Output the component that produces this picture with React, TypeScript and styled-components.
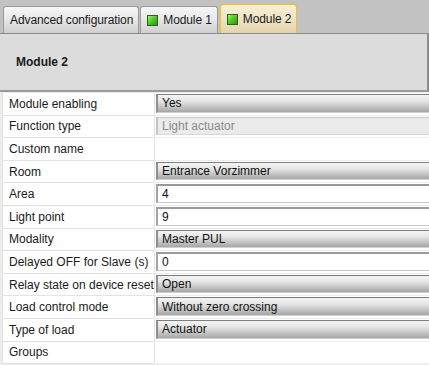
import styled, { createGlobalStyle, css } from "styled-components";

const GlobalStyle = createGlobalStyle`
  html, body {
    margin: 0;
    padding: 0;
    background: #ececec;
  }
  body {
    font-family: "Liberation Sans", Arial, sans-serif;
    font-size: 12px;
    color: #1a1a1a;
  }
`;

type Kind = "select" | "input" | "disabled" | "empty";

const rows: { label: string; value: string; kind: Kind }[] = [
  { label: "Module enabling", value: "Yes", kind: "select" },
  { label: "Function type", value: "Light actuator", kind: "disabled" },
  { label: "Custom name", value: "", kind: "empty" },
  { label: "Room", value: "Entrance Vorzimmer", kind: "select" },
  { label: "Area", value: "4", kind: "input" },
  { label: "Light point", value: "9", kind: "input" },
  { label: "Modality", value: "Master PUL", kind: "select" },
  { label: "Delayed OFF for Slave (s)", value: "0", kind: "input" },
  { label: "Relay state on device reset", value: "Open", kind: "select" },
  { label: "Load control mode", value: "Without zero crossing", kind: "select" },
  { label: "Type of load", value: "Actuator", kind: "select" },
  { label: "Groups", value: "", kind: "empty" },
];

const Page = styled.div`
  width: 429px;
  height: 365px;
  overflow: hidden;
  display: flex;
  flex-direction: column;
`;

const TabBar = styled.div`
  height: 33px;
  display: flex;
  align-items: flex-end;
  gap: 1px;
  padding-left: 3px;
  background: #c2c2c2;
  border-bottom: 1px solid #8a8a8a;
`;

const Tab = styled.div<{ $active?: boolean }>`
  display: flex;
  align-items: center;
  gap: 5px;
  box-sizing: border-box;
  height: 27px;
  padding: 0 5px 0 6px;
  border: 1px solid #9a9a9a;
  border-bottom: none;
  border-radius: 3px 3px 0 0;
  background: linear-gradient(to bottom, #f6f6f6 0%, #e9e9e9 45%, #cfcfcf 100%);
  color: #1a1a1a;
  font-size: 12px;
  letter-spacing: -0.1px;
  white-space: nowrap;
  ${(p) =>
    p.$active &&
    css`
      height: 29px;
      margin-left: 1px;
      border: 1px solid #f2c21a;
      border-bottom: none;
      background: linear-gradient(to bottom, #f7efd9 0%, #efe3c4 50%, #e4d4ad 100%);
    `}
`;

const Led = styled.span`
  width: 9px;
  height: 9px;
  border: 1px solid #2f5e22;
  background: linear-gradient(135deg, #9cf36a 0%, #4fc723 50%, #2b9a12 100%);
`;

const Header = styled.div`
  height: 56px;
  display: flex;
  align-items: center;
  padding-left: 16px;
  background: #dcdcdc;
  border-right: 2px solid #8c8c8c;
  border-bottom: 2px solid #9a9a9a;
  font-weight: bold;
  font-size: 12px;
`;

const Grid = styled.div`
  flex: 1;
  display: grid;
  grid-template-columns: 153px 1fr;
  grid-auto-rows: 22.6px;
  padding: 1px 0 0 2px;
  background: #ececec;
`;

const Label = styled.div`
  display: flex;
  align-items: center;
  padding-left: 6px;
  background: #fff;
  border: 1px solid #e3e3e3;
  border-top: none;
  white-space: nowrap;
  overflow: hidden;
`;

const ValueCell = styled.div`
  display: flex;
  align-items: stretch;
  padding: 1px 0 2px 1px;
  background: #fff;
  border-bottom: 1px solid #ececec;
`;

const Field = styled.div<{ $kind: Kind }>`
  flex: 1;
  display: flex;
  align-items: center;
  padding-left: 4px;
  white-space: nowrap;
  ${(p) =>
    p.$kind === "select" &&
    css`
      border-top: 1px solid #7e7e7e;
      border-left: 2px solid #8e8e8e;
      border-bottom: 1px solid #d0d0d0;
      background: linear-gradient(
        to bottom,
        #f4f4f4 0%,
        #e6e6e6 35%,
        #c4c4c4 70%,
        #a6a6a6 100%
      );
      color: #111;
    `}
  ${(p) =>
    p.$kind === "input" &&
    css`
      border-top: 2px solid #9a9a9a;
      border-left: 2px solid #a4a4a4;
      border-bottom: 1px solid #c8c8c8;
      background: #fff;
      color: #111;
    `}
  ${(p) =>
    p.$kind === "disabled" &&
    css`
      border-top: 1px solid #c4c4c4;
      border-left: 2px solid #c4c4c4;
      border-bottom: 1px solid #d8d8d8;
      background: #ebebeb;
      color: #8a8a8a;
    `}
  ${(p) =>
    p.$kind === "empty" &&
    css`
      background: #fff;
    `}
`;

export default function App() {
  return (
    <Page>
      <GlobalStyle />
      <TabBar>
        <Tab>Advanced configuration</Tab>
        <Tab>
          <Led />
          Module 1
        </Tab>
        <Tab $active>
          <Led />
          Module 2
        </Tab>
      </TabBar>
      <Header>Module 2</Header>
      <Grid>
        {rows.map((r) => (
          <>
            <Label key={r.label}>{r.label}</Label>
            <ValueCell key={r.label + "-v"}>
              <Field $kind={r.kind}>{r.value}</Field>
            </ValueCell>
          </>
        ))}
      </Grid>
    </Page>
  );
}
